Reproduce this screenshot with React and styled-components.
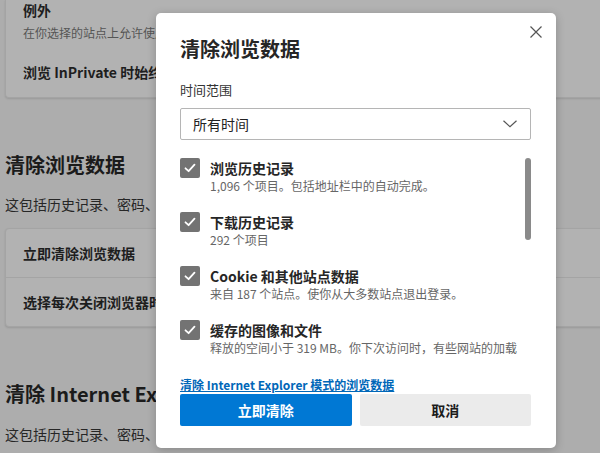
import React from 'react';
import styled, { createGlobalStyle } from 'styled-components';

const GlobalStyle = createGlobalStyle`
  html, body {
    margin: 0;
    padding: 0;
    overflow: hidden;
  }
  body {
    font-family: "Noto Sans CJK SC", "Noto Sans", sans-serif;
    background: #adadad;
  }
`;

const Screen = styled.div`
  position: relative;
  width: 600px;
  height: 453px;
  overflow: hidden;
  background: #adadad;
`;

/* settings page behind the dim overlay */
const Page = styled.div`
  width: 640px;
  padding-left: 5px;
  display: flex;
  flex-direction: column;
`;

const Card = styled.div`
  background: #b2b2b2;
  border: 1px solid #a4a4a4;
  border-top: none;
  border-radius: 0 0 4px 4px;
  box-shadow: 0 1px 2px rgba(0, 0, 0, 0.12);
  display: flex;
  flex-direction: column;
  padding: ${(p) => p.$pad || '0'};
  margin-top: ${(p) => p.$top || '0'};
  ${(p) => p.$full && 'border-top: 1px solid #a4a4a4; border-radius: 4px;'}
`;

const CardTitle = styled.div`
  font-size: 14px;
  font-weight: 700;
  line-height: 20px;
  color: #1e1e1e;
  white-space: nowrap;
`;

const CardDesc = styled.div`
  font-size: 12px;
  line-height: 18px;
  margin: 4px 0 20px;
  color: #555;
  white-space: nowrap;
`;

const CardRow = styled.div`
  height: 48px;
  display: flex;
  align-items: center;
  padding: 0 17px;
  font-size: 14px;
  font-weight: 700;
  color: #1e1e1e;
  white-space: nowrap;
  & + & {
    border-top: 1px solid #a4a4a4;
  }
`;

const Heading = styled.h2`
  margin: ${(p) => p.$top || '53px'} 0 0;
  font-size: 20px;
  line-height: 28px;
  font-weight: 700;
  color: #1b1b1b;
  white-space: nowrap;
`;

const Desc = styled.p`
  margin: ${(p) => p.$top || '15px'} 0 0;
  font-size: 14px;
  line-height: 20px;
  color: #262626;
  white-space: nowrap;
`;

/* dialog */
const Dialog = styled.div`
  position: absolute;
  left: 156px;
  top: 13px;
  width: 400px;
  height: 435px;
  box-sizing: border-box;
  padding: 22px 25px 22px 24px;
  background: #fff;
  border-radius: 5px;
  box-shadow: 0 2px 10px rgba(0, 0, 0, 0.22);
  display: flex;
  flex-direction: column;
`;

const Header = styled.div`
  display: flex;
  justify-content: space-between;
  align-items: flex-start;
`;

const Title = styled.h1`
  margin: 0;
  font-size: 20px;
  line-height: 28px;
  font-weight: 700;
  color: #262626;
`;

const CloseButton = styled.button`
  border: none;
  background: none;
  padding: 0;
  margin: -9px -11px 0 0;
  width: 12px;
  height: 12px;
  display: flex;
  cursor: pointer;
`;

const Label = styled.div`
  margin-top: 18px;
  font-size: 13px;
  line-height: 18px;
  color: #333;
`;

const Select = styled.div`
  margin-top: 9px;
  height: 32px;
  box-sizing: border-box;
  border: 1px solid #b5b5b5;
  border-radius: 2px;
  display: flex;
  align-items: center;
  justify-content: space-between;
  padding: 0 13px 0 12px;
  font-size: 14px;
  color: #222;
`;

const ListBox = styled.div`
  margin-top: 6px;
  height: 210px;
  display: flex;
  gap: 3px;
  overflow: hidden;
`;

const Items = styled.div`
  flex: 1;
  padding-top: 12px;
  display: flex;
  flex-direction: column;
  gap: 18px;
`;

const Item = styled.div`
  display: flex;
  gap: 10px;
  align-items: flex-start;
`;

const Box = styled.span`
  flex: none;
  width: 20px;
  height: 20px;
  border-radius: 2px;
  background: #737373;
  display: flex;
  align-items: center;
  justify-content: center;
`;

const ItemText = styled.div`
  display: flex;
  flex-direction: column;
  min-width: 0;
`;

const ItemTitle = styled.div`
  font-size: 14px;
  line-height: 20px;
  font-weight: 700;
  color: #262626;
`;

const ItemSub = styled.div`
  font-size: 12px;
  line-height: 16px;
  color: #666;
`;

const ScrollTrack = styled.div`
  width: 6px;
  padding-top: 12px;
  flex: none;
`;

const Thumb = styled.div`
  width: 6px;
  height: 82px;
  border-radius: 3px;
  background: #8a8a8a;
`;

const Link = styled.a`
  margin-top: 20px;
  font-size: 12px;
  line-height: 18px;
  font-weight: 700;
  color: #0067b8;
  text-decoration: underline;
  align-self: flex-start;
`;

const Buttons = styled.div`
  display: grid;
  grid-template-columns: 1fr 1fr;
  gap: 8px;
`;

const Button = styled.button`
  height: 32px;
  border: none;
  border-radius: 2px;
  font-family: inherit;
  font-size: 14px;
  font-weight: 700;
  background: ${(p) => (p.$primary ? '#0078d4' : '#ebebeb')};
  color: ${(p) => (p.$primary ? '#fff' : '#1b1b1b')};
  cursor: pointer;
`;

const Check = () => (
  <svg width="14" height="14" viewBox="0 0 14 14">
    <path d="M2.5 7.3 L5.6 10.2 L11.5 3.6" fill="none" stroke="#fff" strokeWidth="1.8" strokeLinecap="round" strokeLinejoin="round" />
  </svg>
);

const items = [
  { title: '浏览历史记录', sub: '1,096 个项目。包括地址栏中的自动完成。' },
  { title: '下载历史记录', sub: '292 个项目' },
  { title: 'Cookie 和其他站点数据', sub: '来自 187 个站点。使你从大多数站点退出登录。' },
  { title: '缓存的图像和文件', sub: '释放的空间小于 319 MB。你下次访问时，有些网站的加载速度可能会变慢。' },
];

export default function App() {
  return (
    <Screen>
      <GlobalStyle />
      <Page>
        <Card $pad="0 17px 15px">
          <CardTitle>例外</CardTitle>
          <CardDesc>在你选择的站点上允许使用</CardDesc>
          <CardTitle>浏览 InPrivate 时始终</CardTitle>
        </Card>
        <Heading>清除浏览数据</Heading>
        <Desc>这包括历史记录、密码、</Desc>
        <Card $full $top="14px">
          <CardRow>立即清除浏览数据</CardRow>
          <CardRow>选择每次关闭浏览器时</CardRow>
        </Card>
        <Heading>清除 Internet Explorer</Heading>
        <Desc $top="16px">这包括历史记录、密码、</Desc>
      </Page>

      <Dialog>
        <Header>
          <Title>清除浏览数据</Title>
          <CloseButton aria-label="关闭">
            <svg width="12" height="12" viewBox="0 0 12 12">
              <path d="M0.5 0.5 L11.5 11.5 M11.5 0.5 L0.5 11.5" stroke="#555" strokeWidth="1.2" />
            </svg>
          </CloseButton>
        </Header>
        <Label>时间范围</Label>
        <Select>
          <span>所有时间</span>
          <svg width="14" height="8" viewBox="0 0 14 8">
            <path d="M0.5 0.8 L7 6.8 L13.5 0.8" fill="none" stroke="#555" strokeWidth="1.2" />
          </svg>
        </Select>
        <ListBox>
          <Items>
            {items.map((it) => (
              <Item key={it.title}>
                <Box>
                  <Check />
                </Box>
                <ItemText>
                  <ItemTitle>{it.title}</ItemTitle>
                  <ItemSub>{it.sub}</ItemSub>
                </ItemText>
              </Item>
            ))}
          </Items>
          <ScrollTrack>
            <Thumb />
          </ScrollTrack>
        </ListBox>
        <Link href="#">清除 Internet Explorer 模式的浏览数据</Link>
        <Buttons>
          <Button $primary>立即清除</Button>
          <Button>取消</Button>
        </Buttons>
      </Dialog>
    </Screen>
  );
}
